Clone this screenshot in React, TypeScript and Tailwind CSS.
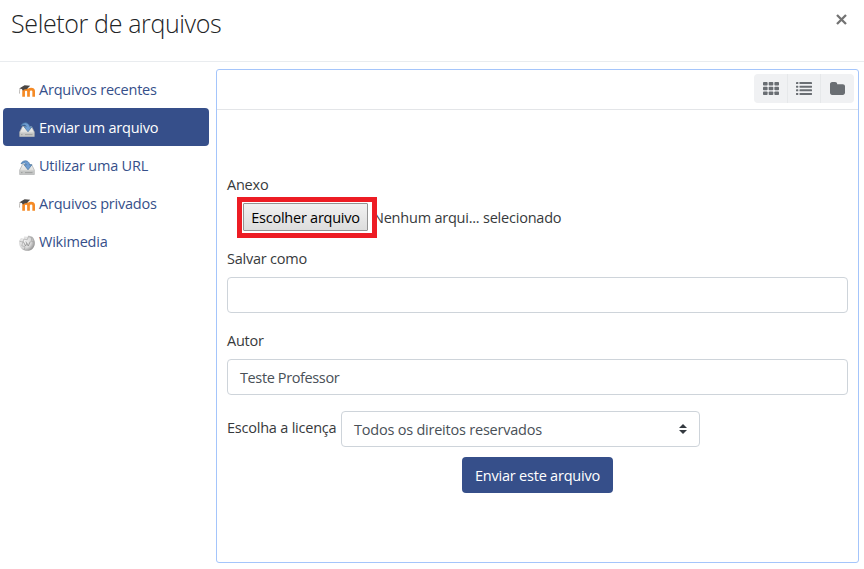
import React from "react";

function MoodleIcon() {
  return (
    <svg width="16" height="16" viewBox="0 0 16 16" className="shrink-0">
      <path d="M4.600 13.700V8.600c0-1.500.9-2.300 2.400-2.300s2.500.8 2.500 2.300v5.100M9.500 13.700V8.600c0-1.500.9-2.500 2.600-2.500s2.600 1 2.600 2.500v5.100" fill="none" stroke="#f58a25" strokeWidth="2.700" />
      <path d="M.2 5.600 5.600 2.200l5.600.600-3.600 3.400c-1.500-.2-2.600.2-3.600 1.500L2.800 6z" fill="#4a4745" />
      <path d="M1 5.600C.5 7.400.4 9 .5 10.600" fill="none" stroke="#a39f9b" strokeWidth=".7" />
    </svg>
  );
}

function UploadIcon() {
  return (
    <svg width="16" height="16" viewBox="0 0 16 16" className="shrink-0">
      <defs>
        <linearGradient id="drive" x1="0" y1="0" x2="0" y2="1">
          <stop offset="0" stopColor="#f1f1ef" />
          <stop offset="1" stopColor="#d0d1cf" />
        </linearGradient>
      </defs>
      <path d="M3.500 5.500h9.100l2.700 5.500v4.600H.7V11z" fill="url(#drive)" stroke="#a9abaa" strokeWidth=".7" />
      <path d="M1 11.500h14v3.800H1z" fill="#c4c6c5" />
      <path d="M6 13.600h7.500M2 13.600h1.500" stroke="#9b9d9c" strokeWidth=".9" />
      <path d="M2 4.900C3 2.200 6 1.200 8.200 2.200c1.500.7 2.300 2 2.400 3.600h2.300l-3.900 5-3.900-5h2.200C7.100 4 4.800 3.400 2 4.900z" fill="#6f9dd2" stroke="#44729f" strokeWidth=".7" />
    </svg>
  );
}

function WikimediaIcon() {
  return (
    <svg width="16" height="16" viewBox="0 0 16 16" className="shrink-0">
      <defs>
        <radialGradient id="globe" cx=".35" cy=".4" r=".7">
          <stop offset="0" stopColor="#f3f3f3" />
          <stop offset=".6" stopColor="#d8d8d8" />
          <stop offset="1" stopColor="#8b8b8b" />
        </radialGradient>
      </defs>
      <path d="M.3 5.500 2 3l2.600.5.600-2L8.500 1.700l1-1.300 3.700 1.300c3.200 3.100 3.500 8.200.8 11.500-2.700 3.300-8.200 3.500-11.300.5C.2 11.300-.4 8.500.3 5.500z" fill="url(#globe)" />
      <path d="M.6 6.300l3.200.7 1.200-3 3.200.8 1.300-3.300 3.500 1.300M3.800 7l-1 3.700 3.200 1-.9 3.300M12.800 2.800 12.200 6.300l3.200.8" fill="none" stroke="#a0a0a0" strokeWidth=".6" />
      <path d="M4.300 6.500 6.500 11l1.400-2.700M6.800 6.500 9.200 11l2.100-4.500" fill="none" stroke="#858585" strokeWidth=".7" />
    </svg>
  );
}

const repositories = [
  { label: "Arquivos recentes", Icon: MoodleIcon, active: false },
  { label: "Enviar um arquivo", Icon: UploadIcon, active: true },
  { label: "Utilizar uma URL", Icon: UploadIcon, active: false },
  { label: "Arquivos privados", Icon: MoodleIcon, active: false },
  { label: "Wikimedia", Icon: WikimediaIcon, active: false },
];

function GridIcon() {
  return (
    <svg width="16" height="13" viewBox="0 0 16 13" fill="#6a6e73">
      {[0, 4.7, 9.4].map((y) =>
        [0, 5.7, 11.4].map((x) => <rect key={`${x}-${y}`} x={x} y={y} width="4.600" height="3.600" rx=".8" />)
      )}
    </svg>
  );
}

function ListIcon() {
  return (
    <svg width="16" height="13" viewBox="0 0 16 13" fill="#6a6e73">
      {[0, 3.65, 7.3, 10.95].map((y) => (
        <g key={y}>
          <rect x="0" y={y} width="2.300" height="2.050" rx=".4" />
          <rect x="3.500" y={y} width="12.500" height="2.050" rx=".4" />
        </g>
      ))}
    </svg>
  );
}

function FolderIcon() {
  return (
    <svg width="15" height="13" viewBox="0 0 15 13" fill="#6a6e73">
      <path d="M0 2.200C0 1 .9 0 2.200 0h2.900c1.200 0 2.100.9 2.100 2.200h5.600c1.200 0 2.200.9 2.200 2.100v6.400c0 1.200-1 2.200-2.200 2.200H2.200C.9 12.900 0 11.900 0 10.700z" />
    </svg>
  );
}

export default function App() {
  return (
    <div className="flex h-[569px] w-[864px] flex-col overflow-hidden bg-white font-['Open_Sans','Noto_Sans',sans-serif] text-[14.5px] leading-[22px] tracking-[-0.22px] text-[#373a3c]">
      <header className="flex h-[62px] shrink-0 items-start justify-between border-b border-[#e9ecef] pl-[11px] pr-[17px]">
        <h1 className="mt-[6px] text-[25px] font-light leading-[34px] tracking-[-0.36px] text-[#212325]">
          Seletor de arquivos
        </h1>
        <button className="mt-[14px]" aria-label="Fechar">
          <svg width="11" height="11" viewBox="0 0 11 11" className="block">
            <path d="m1 1 9 9M10 1l-9 9" stroke="#737373" strokeWidth="2.300" />
          </svg>
        </button>
      </header>

      <div className="flex min-h-0 flex-1">
        <nav className="w-[216px] shrink-0 pl-[3px] pr-[7px] pt-2">
          {repositories.map(({ label, Icon, active }) => (
            <a
              key={label}
              className={`flex h-[38px] items-center gap-1 rounded pl-4 ${active ? "bg-[#364f8a] text-white" : "text-[#364f8a]"}`}
            >
              <span className="pt-[3px]">
                <Icon />
              </span>
              <span className="pt-[2px]">{label}</span>
            </a>
          ))}
        </nav>

        <main className="mb-[6px] mr-[5px] mt-[7px] min-w-0 flex-1 rounded-[3px] border border-[#a4c5fb]">
          <div className="flex h-10 justify-end border-b border-[#e3e5e8] pr-1 pt-1">
            <div className="flex h-[29px] divide-x divide-[#e6e8ea] overflow-hidden rounded bg-[#f0f1f3]">
              <button className="flex w-[34px] items-center justify-center"><GridIcon /></button>
              <button className="flex w-[33px] items-center justify-center"><ListIcon /></button>
              <button className="flex w-[33px] items-center justify-center pr-px"><FolderIcon /></button>
            </div>
          </div>

          <form className="flex flex-col px-[10px] pt-16">
            <label className="h-[22px]">Anexo</label>
            <div className="relative ml-4 mt-[7px] flex h-7 items-center">
              <button type="button" className="h-7 w-[125px] shrink-0 rounded-[1px] border border-[#939393] bg-linear-to-b from-[#f1f1f1] to-[#dddddd] pt-px tracking-[-0.25px] text-black">
                Escolher arquivo
              </button>
              <span className="ml-[5px] pt-[2px]">Nenhum arqui... selecionado</span>
              <div className="absolute -left-[6px] -top-[6px] h-[41px] w-[140px] border-5 border-[#ed1c24]" />
            </div>

            <label className="mt-[17px] h-[22px]">Salvar como</label>
            <div className="mt-[7px] h-9 rounded border border-[#ced4da]" />

            <label className="mt-[17px] h-[22px]">Autor</label>
            <div className="mt-[7px] flex h-9 items-center rounded border border-[#ced4da] pl-3 text-[#495057]">
              <span className="pt-[2px] tracking-[-0.38px]">Teste Professor</span>
            </div>

            <div className="mt-4 flex h-9">
              <label className="w-[114px] whitespace-nowrap pt-[6px]">Escolha a licença</label>
              <div className="flex w-[359px] items-center justify-between rounded border border-[#ced4da] px-3 text-[#495057]">
                <span className="pt-[2px]">Todos os direitos reservados</span>
                <svg width="8" height="10" viewBox="0 0 8 10" fill="#343a40"><path d="M0 4 4 0l4 4zM0 6h8l-4 4z" /></svg>
              </div>
            </div>

            <button type="button" className="mt-[10px] h-9 w-[151px] self-center rounded bg-[#364f8a] pt-[2px] text-white">
              Enviar este arquivo
            </button>
          </form>
        </main>
      </div>
    </div>
  );
}
